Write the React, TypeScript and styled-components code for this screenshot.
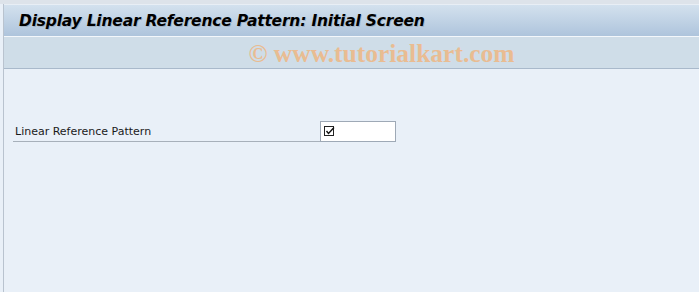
import React from "react";
import styled, { createGlobalStyle } from "styled-components";

const GlobalStyle = createGlobalStyle`
  html, body {
    margin: 0;
    padding: 0;
    background: #e9f0f8;
  }
`;

const Screen = styled.div`
  width: 699px;
  height: 292px;
  overflow: hidden;
  background: #e9f0f8;
  display: flex;
  flex-direction: column;
  border-top: 4px solid #dde3ea;
  box-sizing: border-box;
`;

const Frame = styled.div`
  flex: 1;
  display: flex;
  flex-direction: column;
  margin-left: 3px;
  border-left: 1px solid #b9c3cf;
`;

const TitleBar = styled.div`
  height: 31px;
  display: flex;
  align-items: center;
  padding-left: 15px;
  background: linear-gradient(#d3e1ee, #aec4dc);
  border-top: 1px solid #e8eef5;
  border-bottom: 1px solid #f3f7fb;
`;

const Title = styled.h1`
  margin: 0;
  font-family: "DejaVu Sans", Verdana, sans-serif;
  font-size: 15.5px;
  font-weight: bold;
  font-style: italic;
  color: #000;
  text-shadow: 1px 1px 0 rgba(0, 0, 0, 0.15);
  letter-spacing: -0.2px;
`;

const Toolbar = styled.div`
  height: 31px;
  display: flex;
  align-items: center;
  justify-content: center;
  background: #cfdde8;
  border-bottom: 1px solid #a9b9cb;
`;

const Watermark = styled.span`
  font-family: "Liberation Serif", serif;
  font-weight: bold;
  font-size: 25.5px;
  color: #e9bc92;
  margin-left: 60px;
  margin-top: 2px;
`;

const Content = styled.div`
  padding: 52px 0 0 9px;
`;

const FieldRow = styled.div`
  width: 383px;
  height: 20px;
  display: flex;
  align-items: flex-start;
  justify-content: space-between;
  border-bottom: 1px solid #a7b0ba;
`;

const Label = styled.span`
  font-family: "DejaVu Sans", Tahoma, sans-serif;
  font-size: 11px;
  color: #1a1a1a;
  padding: 4px 0 0 2px;
`;

const InputBox = styled.div`
  box-sizing: border-box;
  width: 76px;
  height: 21px;
  margin-bottom: -1px;
  background: #fff;
  border: 1px solid #9ea9b6;
  display: flex;
  align-items: center;
  padding-left: 3px;
`;

function CheckIcon() {
  return (
    <svg width="11" height="11" viewBox="0 0 11 11">
      <rect x="0.5" y="0.5" width="9" height="9" fill="none" stroke="#222" strokeWidth="1" />
      <path d="M2.5 5 L4.5 7.5 L10 1.5" fill="none" stroke="#111" strokeWidth="1.4" />
    </svg>
  );
}

export default function App() {
  return (
    <>
      <GlobalStyle />
      <Screen>
        <Frame>
          <TitleBar>
            <Title>Display Linear Reference Pattern: Initial Screen</Title>
          </TitleBar>
          <Toolbar>
            <Watermark>© www.tutorialkart.com</Watermark>
          </Toolbar>
          <Content>
            <FieldRow>
              <Label>Linear Reference Pattern</Label>
              <InputBox>
                <CheckIcon />
              </InputBox>
            </FieldRow>
          </Content>
        </Frame>
      </Screen>
    </>
  );
}
